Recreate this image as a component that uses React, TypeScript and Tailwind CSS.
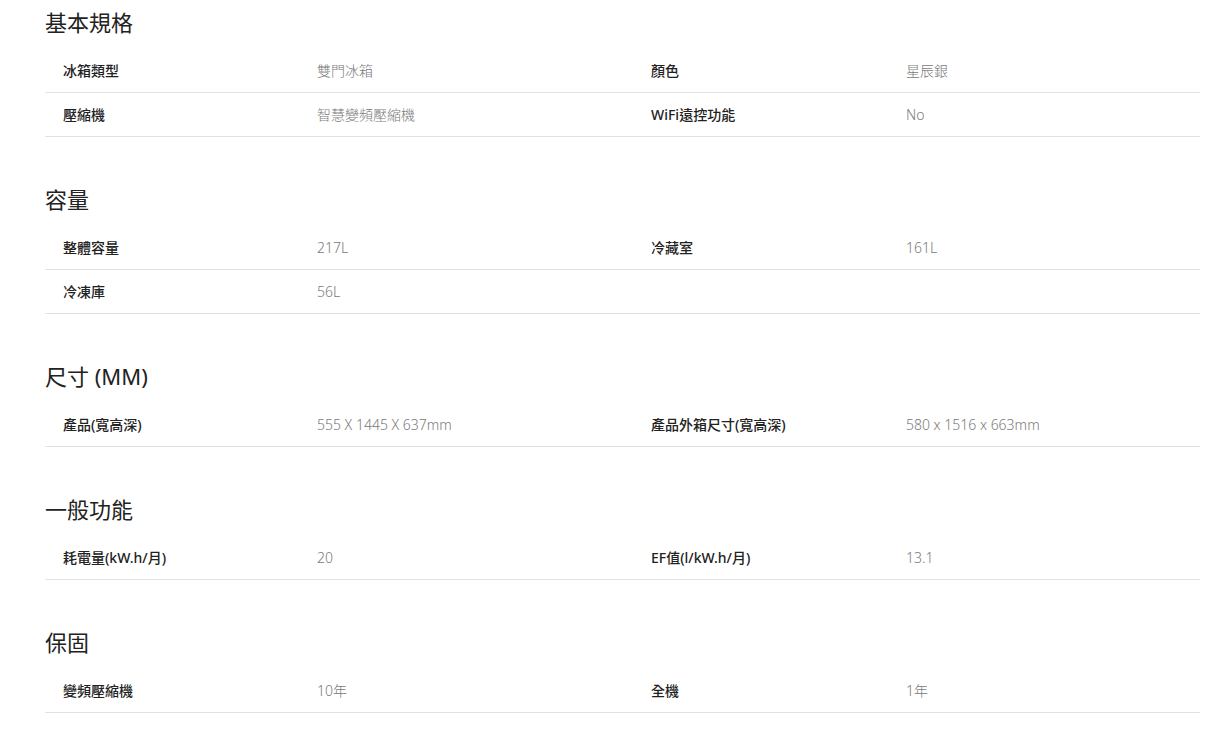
import React from "react";

type Row = [string, string, string?, string?];
const sections: { title: string; rows: Row[] }[] = [
  { title: "基本規格", rows: [["冰箱類型", "雙門冰箱", "顏色", "星辰銀"], ["壓縮機", "智慧變頻壓縮機", "WiFi遠控功能", "No"]] },
  { title: "容量", rows: [["整體容量", "217L", "冷藏室", "161L"], ["冷凍庫", "56L"]] },
  { title: "尺寸 (MM)", rows: [["產品(寬高深)", "555 X 1445 X 637mm", "產品外箱尺寸(寬高深)", "580 x 1516 x 663mm"]] },
  { title: "一般功能", rows: [["耗電量(kW.h/月)", "20", "EF值(l/kW.h/月)", "13.1"]] },
  { title: "保固", rows: [["變頻壓縮機", "10年", "全機", "1年"]] },
];

export default function App() {
  return (
    <div
      className="bg-white w-[1223px] min-h-[748px] pl-[45px] pr-[23px]"
      style={{ fontFamily: '"Noto Sans", "Noto Sans CJK TC", sans-serif' }}
    >
      {sections.map((s, i) => (
        <section key={i} className={i === 0 ? "" : "mt-[40px]"}>
          <h2 className="h-[44px] flex items-center text-[22px] text-[#222] font-normal">{s.title}</h2>
          <div className="mt-[5px]">
            {s.rows.map((r, j) => (
              <div
                key={j}
                className="grid grid-cols-[254px_334px_255px_1fr] items-center h-[44px] pl-[18px] border-b border-[#e2e2e2] text-[14px]"
              >
                <div className="text-[#222] font-medium">{r[0]}</div>
                <div className="text-[#7a7a7a] font-light">{r[1]}</div>
                <div className="text-[#222] font-medium">{r[2] ?? ""}</div>
                <div className="text-[#7a7a7a] font-light">{r[3] ?? ""}</div>
              </div>
            ))}
          </div>
        </section>
      ))}
    </div>
  );
}
